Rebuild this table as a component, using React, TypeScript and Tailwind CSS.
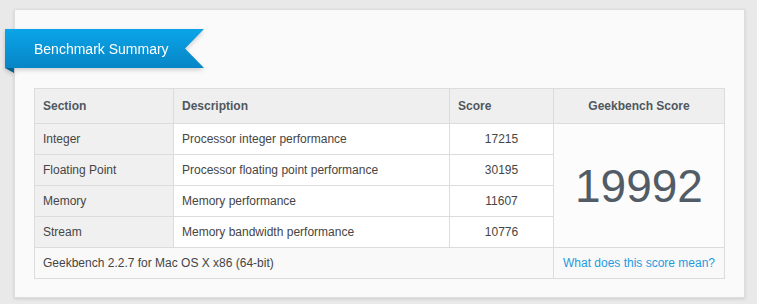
import React from "react";

const rows = [
  { section: "Integer", description: "Processor integer performance", score: "17215" },
  { section: "Floating Point", description: "Processor floating point performance", score: "30195" },
  { section: "Memory", description: "Memory performance", score: "11607" },
  { section: "Stream", description: "Memory bandwidth performance", score: "10776" },
];

export default function App() {
  return (
    <div
      className="w-[757px] h-[304px] bg-[#e9e9e9] pt-[9px] pl-[14px] overflow-hidden"
      style={{ fontFamily: '"Liberation Sans", Arial, Helvetica, sans-serif' }}
    >
      <div className="w-[731px] h-[289px] bg-[#fafafa] border border-[#dedede] shadow-[0_1px_3px_rgba(0,0,0,0.12)] pt-[19px]">
        {/* ribbon title */}
        <div className="relative ml-[-10px] w-[199px] h-[39px] drop-shadow-[0_2px_2px_rgba(0,0,0,0.18)]">
          <div className="h-full bg-gradient-to-b from-[#0aa5e8] to-[#0885c6] [clip-path:polygon(0_0,100%_0,calc(100%-19px)_50%,100%_100%,0_100%)] flex items-center pl-[29px]">
            <span className="text-white text-[14px] leading-none">Benchmark Summary</span>
          </div>
          <svg className="absolute left-0 top-[39px]" width="9" height="5" viewBox="0 0 9 5">
            <polygon points="0,0 9,0 9,5" fill="#04618f" />
          </svg>
        </div>

        <div className="pl-[19px] pt-[20px]">
          <table className="w-[690px] border-collapse table-fixed text-[12px] text-[#454545]">
            <colgroup>
              <col className="w-[139px]" />
              <col className="w-[276px]" />
              <col className="w-[104px]" />
              <col className="w-[171px]" />
            </colgroup>
            <thead>
              <tr className="h-[35px] bg-[#efefef]">
                <th className="border border-[#dcdcdc] text-left font-bold text-[#4f5760] pl-[8px]">Section</th>
                <th className="border border-[#dcdcdc] text-left font-bold text-[#4f5760] pl-[8px]">Description</th>
                <th className="border border-[#dcdcdc] text-left font-bold text-[#4f5760] pl-[8px]">Score</th>
                <th className="border border-[#dcdcdc] text-center font-bold text-[#4f5760]">Geekbench Score</th>
              </tr>
            </thead>
            <tbody>
              {rows.map((r, i) => (
                <tr key={r.section} className="h-[31px]">
                  <td className="border border-[#dcdcdc] bg-[#f0f0f0] pl-[8px]">{r.section}</td>
                  <td className="border border-[#dcdcdc] bg-white pl-[8px]">{r.description}</td>
                  <td className="border border-[#dcdcdc] bg-white text-center">{r.score}</td>
                  {i === 0 && (
                    <td rowSpan={4} className="border border-[#dcdcdc] bg-[#fcfcfc] text-center align-middle">
                      <span className="text-[46px] leading-none text-[#525c66]">19992</span>
                    </td>
                  )}
                </tr>
              ))}
              <tr className="h-[31px] bg-[#f9f9f9]">
                <td colSpan={3} className="border border-[#dcdcdc] pl-[8px]">
                  Geekbench 2.2.7 for Mac OS X x86 (64-bit)
                </td>
                <td className="border border-[#dcdcdc] text-center text-[#1e9be0]">
                  What does this score mean?
                </td>
              </tr>
            </tbody>
          </table>
        </div>
      </div>
    </div>
  );
}
